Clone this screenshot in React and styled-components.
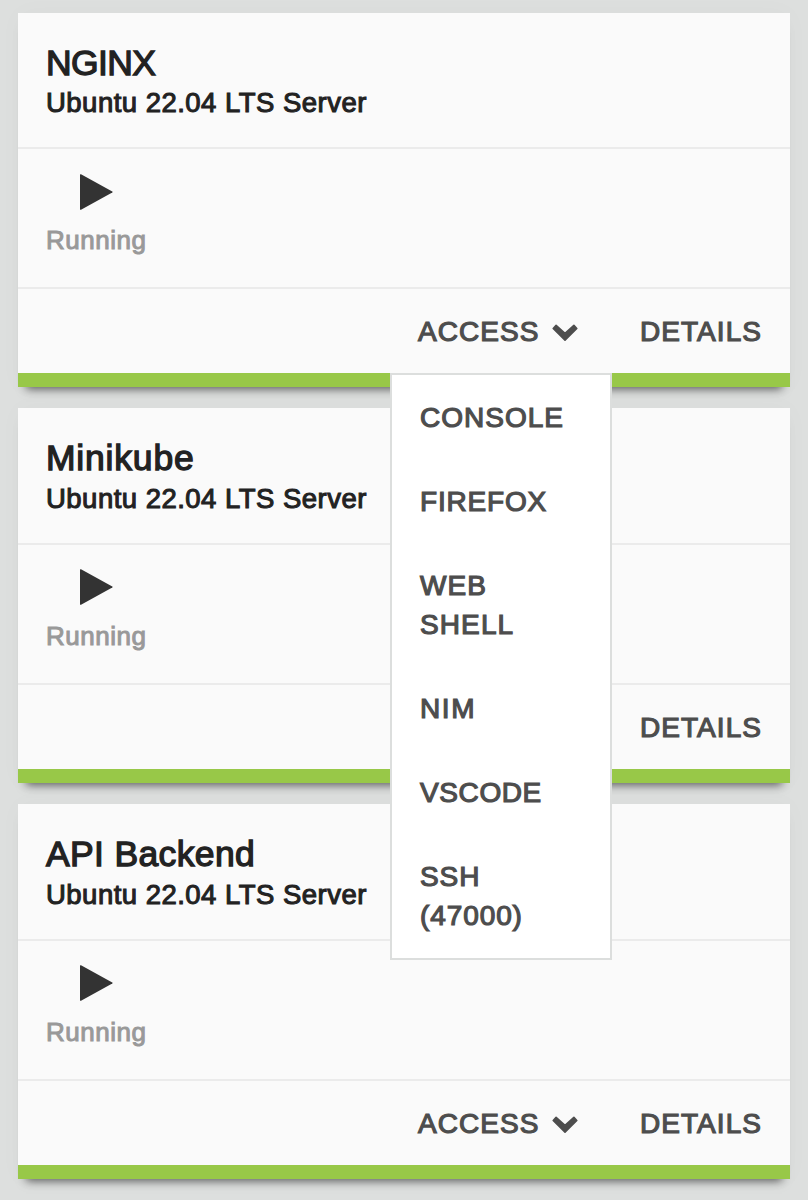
import React from "react";
import styled, { createGlobalStyle } from "styled-components";

const GlobalStyle = createGlobalStyle`
  * { box-sizing: border-box; }
  body {
    margin: 0;
    background: #dddfde;
    font-family: "Liberation Sans", Arial, Helvetica, sans-serif;
    color: #222;
    overflow: hidden;
  }
`;

const Page = styled.main`
  display: flex;
  flex-direction: column;
  gap: 21px;
  height: 1200px;
  padding: 13px 18px 0;
`;

const Card = styled.section`
  flex: none;
  background: #fafafa;
  border-bottom: 14px solid #98c848;
  box-shadow: 0 0 24px rgba(0, 0, 0, 0.025), 0 10px 9px -8px rgba(0, 0, 0, 0.6);
`;

const Header = styled.header`
  height: ${(p) => (p.$compact ? 134 : 135)}px;
  padding: 30px 28px 0;
`;

const Title = styled.h2`
  margin: 0;
  font-size: 35.5px;
  line-height: 40px;
  font-weight: 400;
  letter-spacing: ${(p) => p.$tracking}px;
  -webkit-text-stroke: 1.3px currentColor;
`;

const Subtitle = styled.p`
  margin: ${(p) => (p.$compact ? 0 : 1)}px 0 0;
  font-size: 27.5px;
  line-height: 40px;
  letter-spacing: 0.48px;
  -webkit-text-stroke: 1.05px currentColor;
`;

const Status = styled.div`
  display: flex;
  height: 140px;
  padding: ${(p) => (p.$compact ? 25 : 24)}px 28px 0;
  border-top: 2px solid #ebebeb;
`;

const StatusItem = styled.div`
  display: flex;
  flex-direction: column;
  align-items: center;
  justify-content: space-between;
  height: ${(p) => (p.$compact ? 81 : 82)}px;
`;

const PlayIcon = styled.svg`
  display: block;
  width: 34px;
  height: 36px;
  fill: #333;
`;

const StatusLabel = styled.span`
  color: #999;
  font-size: 26px;
  line-height: 30px;
  letter-spacing: 0.5px;
  -webkit-text-stroke: 1px currentColor;
`;

const Actions = styled.footer`
  display: flex;
  justify-content: flex-end;
  height: 86px;
  border-top: 2px solid #ebebeb;
`;

const Dropdown = styled.div`
  position: relative;
  width: 222px;
`;

const Action = styled.button`
  display: flex;
  align-items: center;
  height: 84px;
  padding: 0 28px 0 27.5px;
  border: 0;
  background: none;
  color: #4d4d4d;
  font: 400 28px/39px "Liberation Sans", Arial, sans-serif;
  letter-spacing: 1.05px;
  text-transform: uppercase;
  -webkit-text-stroke: 1.2px currentColor;
`;

const Chevron = styled.svg`
  width: 26px;
  height: 18px;
  margin: 4px 0 0 13px;
  fill: #4d4d4d;
  stroke: #4d4d4d;
  stroke-width: 1.6;
  stroke-linejoin: round;
`;

const Menu = styled.ul`
  position: absolute;
  z-index: 2;
  top: 84px;
  left: -1px;
  width: 222px;
  height: 587px;
  margin: 0;
  padding: 1px 28px 0 28.5px;
  list-style: none;
  background: #fff;
  border: 2px solid #dcdedd;
`;

const MenuItem = styled.li`
  width: 130px;
  padding: 22px 0 23px;
  color: #4d4d4d;
  font-size: 28px;
  line-height: 39px;
  letter-spacing: ${(p) => p.$tracking}px;
  text-transform: uppercase;
  -webkit-text-stroke: 1.2px currentColor;
`;

const machines = [
  { name: "NGINX", tracking: -0.6, compact: true, access: true, open: true },
  { name: "Minikube", tracking: 0.8, access: false },
  { name: "API Backend", tracking: 0.35, access: true },
];

const targets = [
  { label: "Console", tracking: 1 },
  { label: "Firefox", tracking: 0.8 },
  { label: "Web Shell", tracking: 1.1 },
  { label: "NIM", tracking: 1.6 },
  { label: "VSCode", tracking: 0.6 },
  { label: "SSH (47000)", tracking: 0.9 },
];

function AccessMenu({ open }) {
  return (
    <Dropdown>
      <Action>
        Access
        <Chevron viewBox="0 0 26 18">
          <path d="M4.1 1.4 13 9.4 21.9 1.4 24.8 4.5 13 16.2 1.2 4.5Z" />
        </Chevron>
      </Action>
      {open && (
        <Menu>
          {targets.map((t) => (
            <MenuItem key={t.label} $tracking={t.tracking}>{t.label}</MenuItem>
          ))}
        </Menu>
      )}
    </Dropdown>
  );
}

function Machine({ name, tracking, compact, access, open }) {
  return (
    <Card>
      <Header $compact={compact}>
        <Title $tracking={tracking}>{name}</Title>
        <Subtitle $compact={compact}>Ubuntu 22.04 LTS Server</Subtitle>
      </Header>
      <Status $compact={compact}>
        <StatusItem $compact={compact}>
          <PlayIcon viewBox="0 0 34 36">
            <path d="M1 0.8Q1-.2 2 .3L33.3 17.4Q34 18 33.3 18.6L2 35.7Q1 36.2 1 35.2Z" />
          </PlayIcon>
          <StatusLabel>Running</StatusLabel>
        </StatusItem>
      </Status>
      <Actions>
        {access && <AccessMenu open={open} />}
        <Action>Details</Action>
      </Actions>
    </Card>
  );
}

export default function App() {
  return (
    <>
      <GlobalStyle />
      <Page>
        {machines.map((m) => (
          <Machine key={m.name} {...m} />
        ))}
      </Page>
    </>
  );
}
